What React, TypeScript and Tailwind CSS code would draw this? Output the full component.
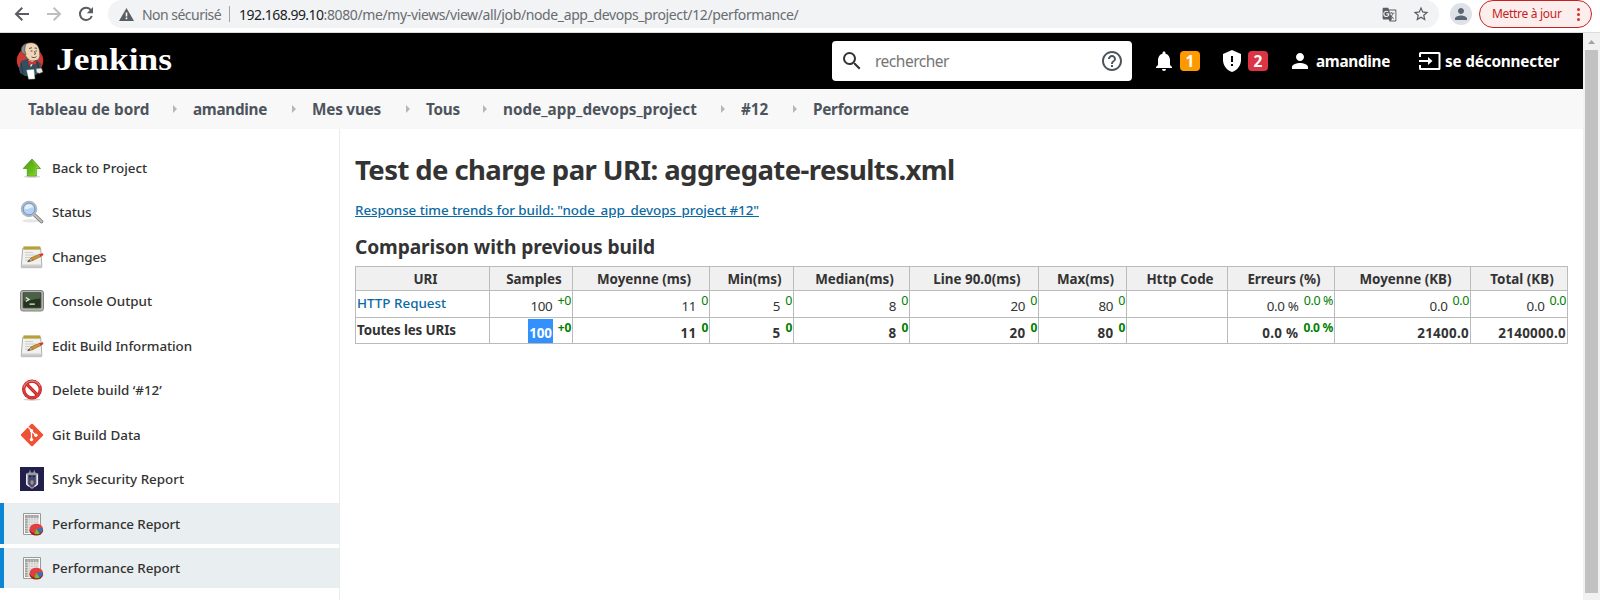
import type { ReactNode } from "react";
import { MdGTranslate, MdNotifications, MdPerson, MdSearch, MdHelpOutline, MdStarBorder } from "react-icons/md";

function JenkinsLogo() {
  return (
    <svg className="h-[38px] w-7" viewBox="0 0 28 38">
      <circle cx="14" cy="18.5" r="13.2" fill="#d33833" />
      <path d="M5 19l7-2.5 8 .5 5 5-2 9-5 3H9l-5-3-1-4z" fill="#335061" />
      <path d="M5 21l2 11M21 20l2 7" stroke="#1d3440" strokeWidth=".8" />
      <path d="M12 18l3 7 4-7z" fill="#fff" />
      <path d="M6 8C5.500 3.500 10 .500 15.500 .800S23 5 23.500 9l.4 5c-.4 3-2.400 5-5.900 5-4 .2-6-1.500-7.500-4L8 12z" fill="#f0d6b7" stroke="#4a3d38" strokeWidth=".6" />
      <path d="M5.500 10C4.500 6 6.500 2.500 10.500 1.500 8.500 4 9.200 6 8.700 8l1.300 5-1.800-.6z" fill="#8e8a89" stroke="#3d3d40" strokeWidth=".6" />
      <path d="M13 6.500l3-.8M18.500 6l2.500.3M14.500 9h2M19.500 9h1.500M18.500 9l1 3-1.500.3M15.500 15c2 1 4 .6 5-.4" fill="none" stroke="#3a2f2c" strokeWidth=".8" />
      <path d="M12 18.500l4.200 1.700 4.300-2-.3 5-4-1.500-4 1.800z" fill="#d33833" stroke="#81181a" strokeWidth=".5" />
      <path d="M10.500 28l7.500-.7 1 9.700-6.500.3z" fill="#fff" stroke="#777" strokeWidth=".4" />
      <path d="M20 26.500l5.500-.5 1.500 4-3.500 1.500-3-1z" fill="#e8e8e8" stroke="#444" strokeWidth=".5" />
    </svg>
  );
}

function ArrowUpIcon() {
  return (
    <svg className="size-6" viewBox="0 0 24 24">
      <defs>
        <linearGradient id="up" x1="0" y1="0" x2="1" y2="1">
          <stop offset="0" stopColor="#4b9e0e" />
          <stop offset="1" stopColor="#7ed321" />
        </linearGradient>
      </defs>
      <ellipse cx="12" cy="20.700" rx="8.500" ry="1.300" fill="#d8d8d8" />
      <path d="M12 3l8.500 9.500h-4.200V20H7.300v-7.500H3.200z" fill="url(#up)" stroke="#3f8f12" strokeWidth=".7" />
      <path d="M12 4.500l6.500 7.200h-3.100V19H8.300" fill="none" stroke="#9be04a" strokeWidth=".7" opacity=".8" />
    </svg>
  );
}

function LensIcon() {
  return (
    <svg className="size-6" viewBox="0 0 24 24">
      <ellipse cx="11" cy="20.800" rx="9" ry="1.600" fill="#e6e6e6" />
      <path d="M14 14.500l7.500 7" stroke="#777975" strokeWidth="3.600" strokeLinecap="round" />
      <path d="M14 14.500l7.500 7" stroke="#bcbebb" strokeWidth="2.200" strokeLinecap="round" />
      <circle cx="9" cy="9" r="7.300" fill="#a9c8ee" stroke="#b4b8b8" strokeWidth="1.900" />
      <circle cx="9" cy="9" r="5.900" fill="#b6d1f2" stroke="#5c86bd" strokeWidth=".8" />
      <path d="M4.500 9c0-3 2-4.700 4.500-4.700S13 6 13.300 7.500C10 7 8 10 4.500 9z" fill="#e3effc" />
    </svg>
  );
}

function NotepadIcon() {
  return (
    <svg className="size-6" viewBox="0 0 24 24">
      <path d="M1 22.700h21" stroke="#c4c4c4" strokeWidth="1" />
      <path d="M2.700 3.500h18l1.200 18.300H1.200z" fill="#f1f1ef" stroke="#9b9b98" strokeWidth=".8" />
      <path d="M1.500 19.500h20l.3 2H1.300z" fill="#cfcfcc" />
      <path d="M3.500 1.500h16.800v3H3.500z" fill="#a08a1e" />
      <path d="M3.500 3h16.800" stroke="#cdb94a" strokeWidth="2.200" strokeDasharray="1 1" />
      <path d="M5 7.500h8M5 10h11M5 12.500h7M5 15h4" stroke="#c8c8c8" strokeWidth=".9" />
      <path d="M8 16.600l3.600-4L20 9l1.300 2.200-8.500 4.300z" fill="#d7922f" stroke="#7d5a22" strokeWidth=".6" />
      <path d="M7.600 16.800l3.700-4 1.400 2.700z" fill="#d6b98b" stroke="#6b5230" strokeWidth=".5" />
      <path d="M7.600 16.800l1.600-1.700.8.900z" fill="#333" />
      <path d="M19.500 9.200l2.700-.9c1.200 0 1.500 1.700.6 2.300l-2.300 1z" fill="#e03030" />
    </svg>
  );
}

function TerminalIcon() {
  return (
    <svg className="size-6" viewBox="0 0 24 24">
      <rect x=".5" y="1.500" width="23" height="20.500" rx="2.500" fill="#b3b5b1" stroke="#80827e" />
      <rect x="3" y="3.500" width="18" height="15.500" rx=".6" fill="#24341f" stroke="#555" strokeWidth=".8" />
      <path d="M3.500 4h17v5.500C14 10 9 12 3.500 12z" fill="#587050" opacity=".75" />
      <path d="M5.800 8.500L9 10.500l-3.200 2M9.500 15.200h5.300" fill="none" stroke="#e4f0df" strokeWidth="1.300" />
      <path d="M16 20.500h2" stroke="#7be02b" strokeWidth="1" />
    </svg>
  );
}

function ForbiddenIcon() {
  return (
    <svg className="size-6" viewBox="0 0 24 24">
      <ellipse cx="12" cy="21.500" rx="8.500" ry="1.200" fill="#cfcfcf" />
      <circle cx="12" cy="11.500" r="8.300" fill="#fff" stroke="#b51414" strokeWidth="3.200" />
      <path d="M6.200 5.700l11.600 11.600" stroke="#b51414" strokeWidth="3.200" />
      <circle cx="12" cy="11.500" r="8.300" fill="none" stroke="#dd3b3b" strokeWidth="2.200" />
      <path d="M6.200 5.700l11.600 11.600" stroke="#dd3b3b" strokeWidth="2.200" />
      <path d="M4 9c1-4 4.500-6 8-6s6.500 1.500 8 5" fill="none" stroke="#f08f8f" strokeWidth="1" />
    </svg>
  );
}

function GitIcon() {
  return (
    <svg className="size-6" viewBox="0 0 24 24">
      <rect x="3.700" y="3.700" width="16.600" height="16.600" rx="1.200" transform="rotate(45 12 12)" fill="#f05033" />
      <path d="M8.300 4.300l3.200 3.200V17M11.500 8l4.300 4.300" fill="none" stroke="#fff" strokeWidth="1.300" />
      <circle cx="11.500" cy="7.800" r="1.700" fill="#fff" />
      <circle cx="11.500" cy="16.600" r="1.700" fill="#fff" />
      <circle cx="15.900" cy="12.200" r="1.700" fill="#fff" />
    </svg>
  );
}

function SnykIcon() {
  return (
    <svg className="size-6" viewBox="0 0 24 24">
      <path d="M0 0h24v24H0z" fill="#22204a" />
      <path d="M6 6.500l3-1 1-3 .8 3h2.600l.8-3 1 3 3 1v11L12 22l-6-4.500z" fill="#9a9aa8" />
      <path d="M8.200 8h7.600v9.500L12 20.500l-3.800-3z" fill="#46486c" />
      <path d="M6.700 7.500v9.700l2.600 2.200M17.300 7.500v9.700l-2.600 2.200" fill="none" stroke="#f0f0f2" strokeWidth="1.200" />
      <path d="M9.300 9.500h1.700M13 9.500h1.700" stroke="#20204a" strokeWidth="1.300" />
      <path d="M10.500 13.500h3v3.200L12 18l-1.500-1.300z" fill="#a58f8c" />
    </svg>
  );
}

function ReportIcon() {
  return (
    <svg className="size-6" viewBox="0 0 24 24">
      <path d="M3.500 1.500h17v21h-17z" fill="#fafafa" stroke="#999" />
      <path d="M5 3h13.500v18H5z" fill="#cfd0ce" />
      <path d="M5 3h13.500v3.500H5zM5 3h3v18H5z" fill="#a0a29f" />
      <path d="M5 6.500h13.500M5 9h13.500M5 11.500h13.500M5 14h13.500M5 16.500h13.500M5 19h13.500M8 3.500v17M10.700 3.500v17M13.400 3.500v17M16 3.500v17" stroke="#f2f2f2" strokeWidth=".5" />
      <ellipse cx="16.300" cy="18.200" rx="6.800" ry="5.200" fill="#9c1616" />
      <ellipse cx="16.300" cy="16.800" rx="6.600" ry="5" fill="#e04040" />
      <path d="M16.300 16.800l6.300-.9c.6 2.500-.6 4.300-2.800 5.500z" fill="#3f6fb5" />
      <path d="M16.300 16.800l3.500 4.900c-1.800.7-3.700.8-5.300.3z" fill="#6fc32a" />
    </svg>
  );
}

type Task = { label: string; icon: () => ReactNode; active?: boolean; tracking: string };

const tasks: Task[] = [
  { label: "Back to Project", icon: ArrowUpIcon, tracking: "tracking-[-0.03px]" },
  { label: "Status", icon: LensIcon, tracking: "tracking-[-0.15px]" },
  { label: "Changes", icon: NotepadIcon, tracking: "tracking-[-0.15px]" },
  { label: "Console Output", icon: TerminalIcon, tracking: "tracking-[-0.03px]" },
  { label: "Edit Build Information", icon: NotepadIcon, tracking: "tracking-[-0.07px]" },
  { label: "Delete build ‘#12’", icon: ForbiddenIcon, tracking: "tracking-[0px]" },
  { label: "Git Build Data", icon: GitIcon, tracking: "tracking-[0.03px]" },
  { label: "Snyk Security Report", icon: SnykIcon, tracking: "tracking-[-0.01px]" },
  { label: "Performance Report", icon: ReportIcon, active: true, tracking: "tracking-[-0.11px]" },
  { label: "Performance Report", icon: ReportIcon, active: true, tracking: "tracking-[-0.11px]" },
];

const crumbs = [
  { label: "Tableau de bord", size: "w-[165px] tracking-[0px]" },
  { label: "amandine", size: "w-[119px] tracking-[-0.31px]" },
  { label: "Mes vues", size: "w-[114px] tracking-[-0.21px]" },
  { label: "Tous", size: "w-[77px] tracking-[-0.24px]" },
  { label: "node_app_devops_project", size: "w-[238px]" },
  { label: "#12", size: "w-[72px] tracking-[-0.05px]" },
  { label: "Performance", size: "tracking-[-0.26px]" },
];

const columns = [
  { title: "URI", width: "w-[134px]" },
  { title: "Samples", width: "w-[83px]" },
  { title: "Moyenne (ms)", width: "w-[137px]" },
  { title: "Min(ms)", width: "w-[84px]" },
  { title: "Median(ms)", width: "w-[116px]" },
  { title: "Line 90.0(ms)", width: "w-[129px]" },
  { title: "Max(ms)", width: "w-[88px]" },
  { title: "Http Code", width: "w-[101px]" },
  { title: "Erreurs (%)", width: "w-[107px]" },
  { title: "Moyenne (KB)", width: "w-[136px]" },
  { title: "Total (KB)", width: "w-[97px]" },
];

type Cell = { value: string; diff?: string; selected?: boolean };

const requestCells: Cell[] = [
  { value: "100", diff: "+0" },
  { value: "11", diff: "0" },
  { value: "5", diff: "0" },
  { value: "8", diff: "0" },
  { value: "20", diff: "0" },
  { value: "80", diff: "0" },
  { value: "" },
  { value: "0.0 %", diff: "0.0 %" },
  { value: "0.0", diff: "0.0" },
  { value: "0.0", diff: "0.0" },
];

const totalCells: Cell[] = [
  { value: "100", diff: "+0", selected: true },
  { value: "11", diff: "0" },
  { value: "5", diff: "0" },
  { value: "8", diff: "0" },
  { value: "20", diff: "0" },
  { value: "80", diff: "0" },
  { value: "" },
  { value: "0.0 %", diff: "0.0 %" },
  { value: "21400.0" },
  { value: "2140000.0" },
];

function ResultCell({ cell, bold }: { cell: Cell; bold?: boolean }) {
  return (
    <td className="border-r border-b border-[#bbb] p-0">
      <div className={bold ? "flex h-[25px] items-start justify-end pr-px" : "flex h-[26px] items-start justify-end pr-px"}>
        <span
          className={
            cell.selected
              ? "mt-px h-6 bg-[#3390ff] px-px leading-[28px] tracking-[-0.1px] text-white"
              : bold
                ? "mt-px leading-[28px] tracking-[0.3px]"
                : "mt-px leading-[28px] tracking-[-0.3px]"
          }
        >
          {cell.value}
        </span>
        {cell.diff && (
          <span className={bold ? "ml-[5px] text-[12px] leading-[19px] tracking-[-0.3px] text-[#008000]" : "ml-[5px] text-[12.5px] leading-[19px] tracking-[-0.4px] text-[#008000]"}>
            {cell.diff}
          </span>
        )}
      </div>
    </td>
  );
}

function BrowserBar() {
  return (
    <div className="flex h-[33px] items-start border-b border-[#dadce0] bg-white">
      <svg className="h-7 w-[108px] shrink-0" viewBox="0 0 108 28" fill="none">
        <path d="M29 14H16.500M22.300 7.800L16 14l6.300 6.200" stroke="#5a5d61" strokeWidth="2" />
        <path d="M47 14h12.500M53.700 7.800L60 14l-6.300 6.200" stroke="#bcbec1" strokeWidth="2" />
        <path d="M91 10.300A6.100 6.100 0 1 0 91.800 16" stroke="#5a5d61" strokeWidth="2" />
        <path d="M93 7v6.200h-6.200z" fill="#5a5d61" />
      </svg>
      <div className="flex h-7 w-[1331px] shrink-0 items-center rounded-r-full rounded-l-full bg-[#f1f3f4] pr-[9px] pl-[11px] text-[14px] whitespace-nowrap text-[#696c70]">
        <svg className="h-[13px] w-[15px]" viewBox="0 0 15 13">
          <path d="M7.500 0L15 13H0z" fill="#5a5d61" />
          <path d="M6.700 4.500h1.600v4H6.700zM6.700 9.600h1.600v1.600H6.700z" fill="#fff" />
        </svg>
        <span className="ml-[8px] w-[87px] tracking-[-0.53px]">Non sécurisé</span>
        <span className="h-4 w-px bg-[#9fa1a4]" />
        <span className="ml-[9px] tracking-[-0.52px] text-[#202124]">192.168.99.10</span>
        <span className="tracking-[-0.38px]">:8080/me/my-views/view/all/job/node_app_devops_project/12/performance/</span>
        <MdGTranslate className="ml-auto size-[15px] text-[#5a5d61]" />
        <MdStarBorder className="ml-[15px] size-[18px] text-[#5a5d61]" />
      </div>
      <div className="mt-[3px] ml-[11px] flex size-[22px] shrink-0 items-center justify-center rounded-full bg-[#dee1e6]">
        <MdPerson className="size-[18px] text-[#5a6577]" />
      </div>
      <div className="ml-[7px] flex h-7 w-[113px] shrink-0 items-center rounded-full border border-[#c5221f] bg-[#fceeed] pl-3 text-[12px] tracking-[-0.3px] whitespace-nowrap text-[#c5221f]">
        Mettre à jour
        <span className="mr-[11px] ml-auto flex flex-col gap-[2px]">
          <span className="size-[3px] rounded-full bg-[#d93025]" />
          <span className="size-[3px] rounded-full bg-[#d93025]" />
          <span className="size-[3px] rounded-full bg-[#d93025]" />
        </span>
      </div>
    </div>
  );
}

function Header() {
  return (
    <header className="flex h-14 items-center bg-black text-[15.3px] font-bold whitespace-nowrap text-white">
      <div className="ml-4 h-[38px] w-10 shrink-0">
        <JenkinsLogo />
      </div>
      <div className="-mt-0.5 w-[776px] shrink-0 font-['Liberation_Serif',serif] text-[31px] leading-10">
        <span className="inline-block origin-left scale-x-[1.14]">Jenkins</span>
      </div>
      <div className="flex h-10 w-[300px] shrink-0 items-center rounded-[4px] bg-white font-normal text-[#757575]">
        <MdSearch className="ml-[8px] size-6 text-[#333]" />
        <span className="mt-0.5 ml-[11px] text-[15.5px] tracking-[-0.49px]">rechercher</span>
        <MdHelpOutline className="mr-[8px] ml-auto size-6 text-[#4d545d]" />
      </div>
      <MdNotifications className="ml-5 size-6 shrink-0" />
      <span className="ml-1 flex size-5 shrink-0 items-center justify-center rounded-[4px] bg-[#fe9a00] pt-px text-[15.5px]">1</span>
      <svg className="ml-5 size-6 shrink-0" viewBox="0 0 24 24">
        <path d="M12 1l9 4v6c0 5.500-3.800 10.700-9 12-5.200-1.300-9-6.500-9-12V5z" fill="#fff" />
        <path d="M11 7h2v6h-2zM11 15h2v2h-2z" fill="#000" />
      </svg>
      <span className="ml-1 flex size-5 shrink-0 items-center justify-center rounded-[4px] bg-[#dc3545] pt-px text-[15.5px]">2</span>
      <MdPerson className="ml-5 size-6 shrink-0" />
      <span className="mt-px ml-1 w-[98px] shrink-0 tracking-[-0.31px]">amandine</span>
      <svg className="ml-1 h-6 w-6 shrink-0" viewBox="0 0 24 24" fill="none">
        <path d="M2 8V4.500Q2 4 2.500 4h18.500q.5 0 .5.500v15q0 .5-.5.500H2.500Q2 20 2 19.500V16" stroke="#fff" strokeWidth="2" />
        <path d="M1 11h9V8l4.500 4-4.500 4v-3H1z" fill="#fff" />
      </svg>
      <span className="mt-px ml-[3px] tracking-[-0.18px]">se déconnecter</span>
    </header>
  );
}

function Breadcrumbs() {
  return (
    <nav className="flex h-10 bg-[#f8f8f8] pl-7 text-[15.3px] font-bold whitespace-nowrap text-[#4d545d]">
      {crumbs.map((crumb, i) => (
        <div key={crumb.label} className={`${crumb.size} flex shrink-0 items-center pt-px`}>
          {crumb.label}
          {i < crumbs.length - 1 && (
            <svg className="mr-4 mb-[1px] ml-auto h-2 w-1" viewBox="0 0 4 8">
              <path d="M0 0l4 4-4 4z" fill="#b4b6b9" />
            </svg>
          )}
        </div>
      ))}
    </nav>
  );
}

function Sidebar() {
  return (
    <aside className="flex w-[340px] shrink-0 flex-col gap-[4.1px] border-r border-[#ebebeb] pt-[18.500px]">
      {tasks.map((task, i) => (
        <div
          key={i}
          className={
            task.active
              ? "flex h-[40.4px] items-center border-l-4 border-[#0b86d4] bg-[#e9eef0] pl-4"
              : "flex h-[40.4px] items-center pl-5"
          }
        >
          <task.icon />
          <span className={`${task.tracking} ml-2 text-[13.400px] font-medium text-[#333]`}>{task.label}</span>
        </div>
      ))}
    </aside>
  );
}

function ResultTable() {
  return (
    <table className="w-[1212px] table-fixed border-separate border-spacing-0 border-t border-l border-[#bbb] text-[13.400px] whitespace-nowrap">
      <thead>
        <tr className="h-6 bg-[#f0f0f0]">
          {columns.map((column, i) => (
            <th key={i} className={`${column.width} border-r border-b border-[#bbb] p-0 pl-[6px] text-center leading-[22px] font-bold`}>
              {column.title}
            </th>
          ))}
        </tr>
      </thead>
      <tbody>
        <tr>
          <td className="border-r border-b border-[#bbb] p-0 pl-px align-top leading-6 font-medium text-[#0b6aa2]">HTTP Request</td>
          {requestCells.map((cell, i) => (
            <ResultCell key={i} cell={cell} />
          ))}
        </tr>
        <tr className="font-bold">
          <td className="border-r border-b border-[#bbb] p-0 pl-px align-top leading-[25px] tracking-[-0.14px]">Toutes les URIs</td>
          {totalCells.map((cell, i) => (
            <ResultCell key={i} cell={cell} bold />
          ))}
        </tr>
      </tbody>
    </table>
  );
}

function PageScrollbar() {
  return (
    <div className="flex w-[17px] shrink-0 flex-col items-center bg-[#f1f1f1]">
      <svg className="h-[17px] w-[17px] shrink-0" viewBox="0 0 17 17">
        <path d="M5 11l3.500-4 3.500 4z" fill="#a3a3a3" />
      </svg>
      <div className="mb-[7px] w-[13px] grow bg-[#c1c1c1]" />
    </div>
  );
}

export default function App() {
  return (
    <div className="flex h-[600px] w-[1600px] flex-col overflow-hidden bg-white font-['Noto_Sans',sans-serif] text-[#333]">
      <BrowserBar />
      <div className="flex min-h-0 grow">
        <div className="flex w-[1583px] shrink-0 flex-col">
          <Header />
          <Breadcrumbs />
          <div className="flex min-h-0 grow">
            <Sidebar />
            <main className="pl-[15px] whitespace-nowrap">
              <h1 className="mt-[21px] text-[27.5px] leading-10 font-bold tracking-[-0.59px]">
                Test de charge par URI: aggregate-results.xml
              </h1>
              <p className="mt-[10px] text-[13.400px] leading-5 font-medium tracking-[-0.06px] text-[#0b6aa2] underline">
                Response time trends for build: "node_app_devops_project #12"
              </p>
              <h2 className="mt-[12px] mb-[4px] text-[19.200px] leading-[30px] font-bold tracking-[-0.11px]">
                Comparison with previous build
              </h2>
              <ResultTable />
            </main>
          </div>
        </div>
        <PageScrollbar />
      </div>
    </div>
  );
}
